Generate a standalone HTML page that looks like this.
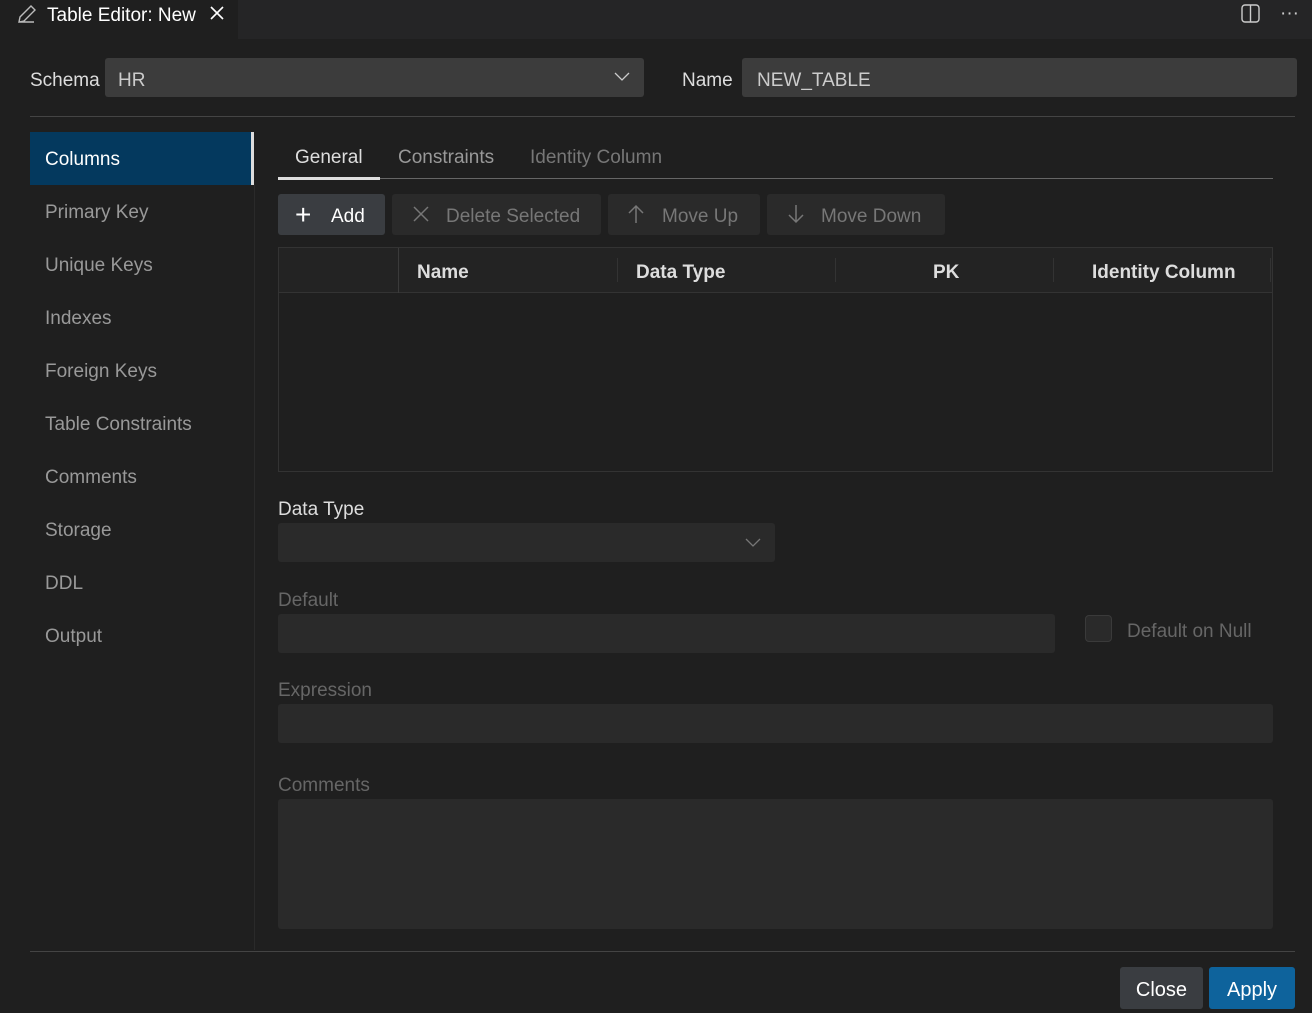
<!DOCTYPE html>
<html><head><meta charset="utf-8"><style>
*{box-sizing:border-box;margin:0;padding:0}
body{width:1312px;height:1009px;background:#1f1f1f;font-family:"Liberation Sans",sans-serif;color:#ccc;position:relative;overflow:hidden}
.a{position:absolute}
.t{font-size:19px;white-space:nowrap;margin-top:2px}
.in{position:absolute;background:#2a2a2a;border-radius:3px}
.btn{position:absolute;top:194px;height:41px;background:#2a2a2a;border-radius:3px;color:#777;font-size:19px;line-height:45px}
</style></head><body>
<div class="a" style="left:0;top:0;width:1312px;height:39px;background:#252526"></div>
<div class="a" style="left:0;top:0;width:238px;height:39px;background:#1f1f1f"></div>
<svg class="a" style="left:16px;top:3px" width="22" height="22" viewBox="0 0 22 22" fill="none" stroke="#bbb" stroke-width="1.4"><path d="M3 19l1-5L15 3l4 4L8 18z M3 19h15"/></svg>
<div class="a t" style="left:47px;top:3px;color:#fff">Table Editor: New</div>
<svg class="a" style="left:209px;top:5px" width="16" height="16" viewBox="0 0 16 16" stroke="#fff" stroke-width="1.6"><path d="M2 2l12 12M14 2L2 14"/></svg>
<svg class="a" style="left:1240px;top:3px" width="21" height="21" viewBox="0 0 21 21" fill="none" stroke="#ccc" stroke-width="1.4"><rect x="2" y="2" width="17" height="17" rx="3"/><path d="M10.5 2v17"/></svg>
<div class="a t" style="left:1280px;top:1px;color:#ccc">···</div>

<div class="a t" style="left:30px;top:68px;color:#ddd">Schema</div>
<div class="in" style="left:105px;top:58px;width:539px;height:39px;background:#3c3c3c"></div>
<div class="a t" style="left:118px;top:68px;color:#ccc">HR</div>
<svg class="a" style="left:614px;top:72px" width="16" height="10" viewBox="0 0 16 10" fill="none" stroke="#ccc" stroke-width="1.3"><path d="M1 1l7 7 7-7"/></svg>
<div class="a t" style="left:682px;top:68px;color:#ddd">Name</div>
<div class="in" style="left:742px;top:58px;width:555px;height:39px;background:#3c3c3c"></div>
<div class="a t" style="left:757px;top:68px;color:#ccc">NEW_TABLE</div>
<div class="a" style="left:30px;top:116px;width:1265px;height:1px;background:#444"></div>

<div class="a" style="left:30px;top:132px;width:222px;height:53px;background:#04395e"></div>
<div class="a" style="left:251px;top:132px;width:3px;height:53px;background:#ddd"></div>
<div class="a" style="left:254px;top:185px;width:1px;height:765px;background:#2a2a2a"></div>
<div class="a t" style="left:45px;top:147px;color:#fff">Columns</div>
<div class="a t" style="left:45px;top:200px;color:#999">Primary Key</div>
<div class="a t" style="left:45px;top:253px;color:#999">Unique Keys</div>
<div class="a t" style="left:45px;top:306px;color:#999">Indexes</div>
<div class="a t" style="left:45px;top:359px;color:#999">Foreign Keys</div>
<div class="a t" style="left:45px;top:412px;color:#999">Table Constraints</div>
<div class="a t" style="left:45px;top:465px;color:#999">Comments</div>
<div class="a t" style="left:45px;top:518px;color:#999">Storage</div>
<div class="a t" style="left:45px;top:571px;color:#999">DDL</div>
<div class="a t" style="left:45px;top:624px;color:#999">Output</div>

<div class="a t" style="left:295px;top:145px;color:#ddd">General</div>
<div class="a t" style="left:398px;top:145px;color:#999">Constraints</div>
<div class="a t" style="left:530px;top:145px;color:#777">Identity Column</div>
<div class="a" style="left:278px;top:178px;width:995px;height:1px;background:#666"></div>
<div class="a" style="left:278px;top:177px;width:102px;height:3px;background:#ddd"></div>

<div class="btn" style="left:278px;width:107px;background:#3a3d41;color:#fff"><span style="position:absolute;left:17px;top:-2px;font-size:28px;font-weight:300">+</span><span style="position:absolute;left:53px">Add</span></div>
<div class="btn" style="left:392px;width:209px"><svg class="a" style="left:21px;top:12px" width="16" height="16" viewBox="0 0 16 16" stroke="#777" stroke-width="1.5"><path d="M1 1l14 14M15 1L1 15"/></svg><span style="position:absolute;left:54px">Delete Selected</span></div>
<div class="btn" style="left:608px;width:152px"><svg class="a" style="left:20px;top:10px" width="16" height="20" viewBox="0 0 16 20" fill="none" stroke="#777" stroke-width="1.5"><path d="M8 19V2M1 9l7-7 7 7"/></svg><span style="position:absolute;left:54px">Move Up</span></div>
<div class="btn" style="left:767px;width:178px"><svg class="a" style="left:21px;top:10px" width="16" height="20" viewBox="0 0 16 20" fill="none" stroke="#777" stroke-width="1.5"><path d="M8 1v17M1 11l7 7 7-7"/></svg><span style="position:absolute;left:54px">Move Down</span></div>

<div class="a" style="left:278px;top:247px;width:995px;height:225px;border:1px solid #333"></div>
<div class="a" style="left:279px;top:248px;width:993px;height:45px;background:#232323;border-bottom:1px solid #333"></div>
<div class="a" style="left:398px;top:248px;width:1px;height:45px;background:#3a3a3a"></div>
<div class="a" style="left:617px;top:258px;width:1px;height:24px;background:#333"></div>
<div class="a" style="left:835px;top:258px;width:1px;height:24px;background:#333"></div>
<div class="a" style="left:1053px;top:258px;width:1px;height:24px;background:#333"></div>
<div class="a" style="left:1270px;top:258px;width:1px;height:24px;background:#333"></div>
<div class="a t" style="left:417px;top:260px;color:#ddd;font-weight:bold">Name</div>
<div class="a t" style="left:636px;top:260px;color:#ddd;font-weight:bold">Data Type</div>
<div class="a t" style="left:933px;top:260px;color:#ddd;font-weight:bold">PK</div>
<div class="a t" style="left:1092px;top:260px;color:#ddd;font-weight:bold">Identity Column</div>

<div class="a t" style="left:278px;top:497px;color:#ddd">Data Type</div>
<div class="in" style="left:278px;top:523px;width:497px;height:39px"></div>
<svg class="a" style="left:745px;top:538px" width="16" height="10" viewBox="0 0 16 10" fill="none" stroke="#777" stroke-width="1.3"><path d="M1 1l7 7 7-7"/></svg>
<div class="a t" style="left:278px;top:588px;color:#666">Default</div>
<div class="in" style="left:278px;top:614px;width:777px;height:39px"></div>
<div class="a" style="left:1085px;top:615px;width:27px;height:27px;border:1px solid #3a3a3a;border-radius:4px;background:#2a2a2a"></div>
<div class="a t" style="left:1127px;top:619px;color:#666">Default on Null</div>
<div class="a t" style="left:278px;top:678px;color:#666">Expression</div>
<div class="in" style="left:278px;top:704px;width:995px;height:39px"></div>
<div class="a t" style="left:278px;top:773px;color:#666">Comments</div>
<div class="in" style="left:278px;top:799px;width:995px;height:130px"></div>

<div class="a" style="left:30px;top:951px;width:1265px;height:1px;background:#444"></div>
<div class="a" style="left:1120px;top:967px;width:83px;height:42px;background:#3a3d41;border-radius:3px;color:#fff;font-size:20px;text-align:center;line-height:46px">Close</div>
<div class="a" style="left:1209px;top:967px;width:86px;height:42px;background:#0e639c;border-radius:3px;color:#fff;font-size:20px;text-align:center;line-height:46px">Apply</div>
</body></html>
